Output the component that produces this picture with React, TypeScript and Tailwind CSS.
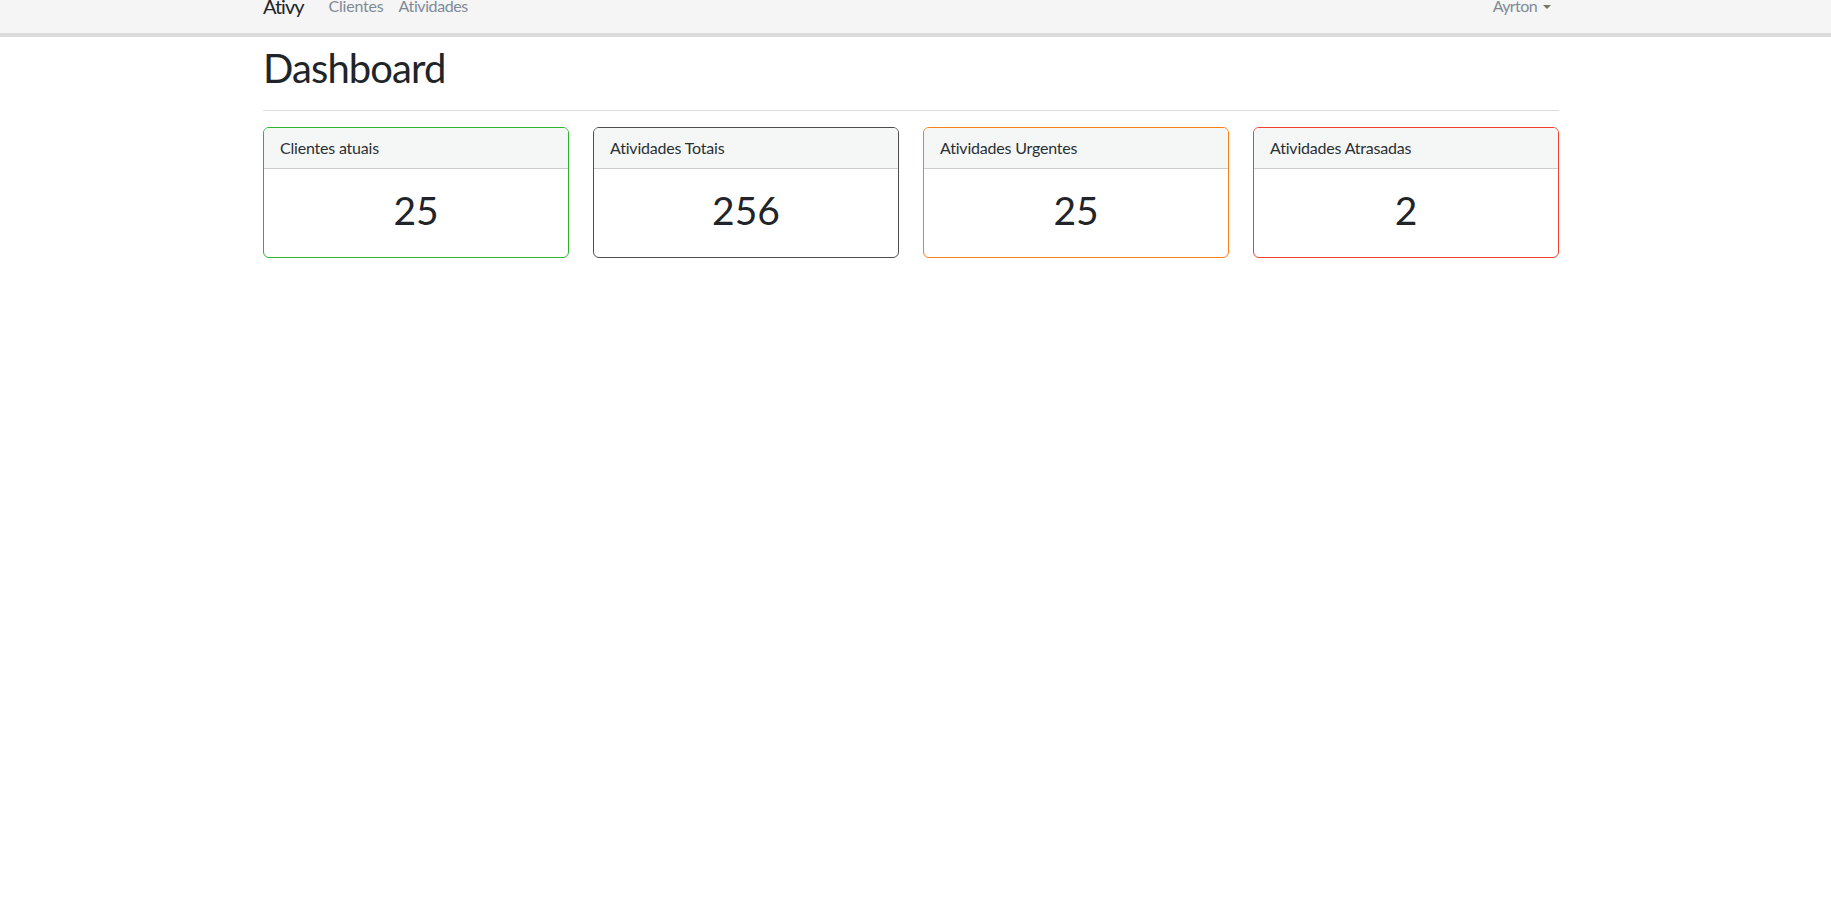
// --- Dados dos cards ---
const stats = [
  { title: 'Clientes atuais', value: '25', border: 'border-[#2db52d]' },
  { title: 'Atividades Totais', value: '256', border: 'border-[#4d4d4d]' },
  { title: 'Atividades Urgentes', value: '25', border: 'border-[#fd7e14]' },
  { title: 'Atividades Atrasadas', value: '2', border: 'border-[#f4402f]' },
];

const StatCard = ({ title, value, border }: { title: string; value: string; border: string }) => (
  <div className={`rounded-[6px] border ${border} overflow-hidden bg-white`}>
    <div className="bg-[#f5f7f6] border-b border-[#cccccc] px-4 py-2 text-[16px] leading-[24px] tracking-[-0.2px] text-[#2b2f33]">
      {title}
    </div>
    <div className="pt-[17px] pb-[23px] text-center text-[39px] leading-[48px] text-[#212529]">{value}</div>
  </div>
);

// --- Página ---
export default function App() {
  return (
    <div className="min-h-screen bg-white" style={{ fontFamily: 'Lato, "Open Sans", sans-serif' }}>
      {/* Navbar */}
      <nav className="h-[37px] bg-[#f5f5f5] border-b-4 border-[#dcdcdc] overflow-hidden">
        <div className="ml-[263px] w-[1296px] flex items-start">
          <span className="-mt-[4px] text-[20px] leading-[20px] tracking-[-1px] text-[#212529]">Ativy</span>
          <span className="ml-[25px] -mt-[2px] text-[16px] leading-[16px] tracking-[-0.2px] text-[#7f8a95]">Clientes</span>
          <span className="ml-[15px] -mt-[2px] text-[16px] leading-[16px] tracking-[-0.4px] text-[#7f8a95]">Atividades</span>
          <span className="ml-auto mr-[8px] -mt-[2px] flex items-center text-[16px] leading-[16px] tracking-[-0.6px] text-[#7f8a95]">
            Ayrton
            <span className="ml-[6px] mt-[1px] w-0 h-0 border-l-[4px] border-r-[4px] border-t-[4px] border-l-transparent border-r-transparent border-t-[#6f7a5f]" />
          </span>
        </div>
      </nav>

      {/* Conteúdo */}
      <main className="ml-[263px] w-[1296px]">
        <h1 className="mt-[7px] text-[40px] leading-[48px] tracking-[-0.9px] text-[#212529]">Dashboard</h1>
        <hr className="mt-[18px] border-t border-[#dcdee3]" />
        <div className="mt-[16px] grid grid-cols-4 gap-[24px]">
          {stats.map((s) => (
            <StatCard key={s.title} {...s} />
          ))}
        </div>
      </main>
    </div>
  );
}
